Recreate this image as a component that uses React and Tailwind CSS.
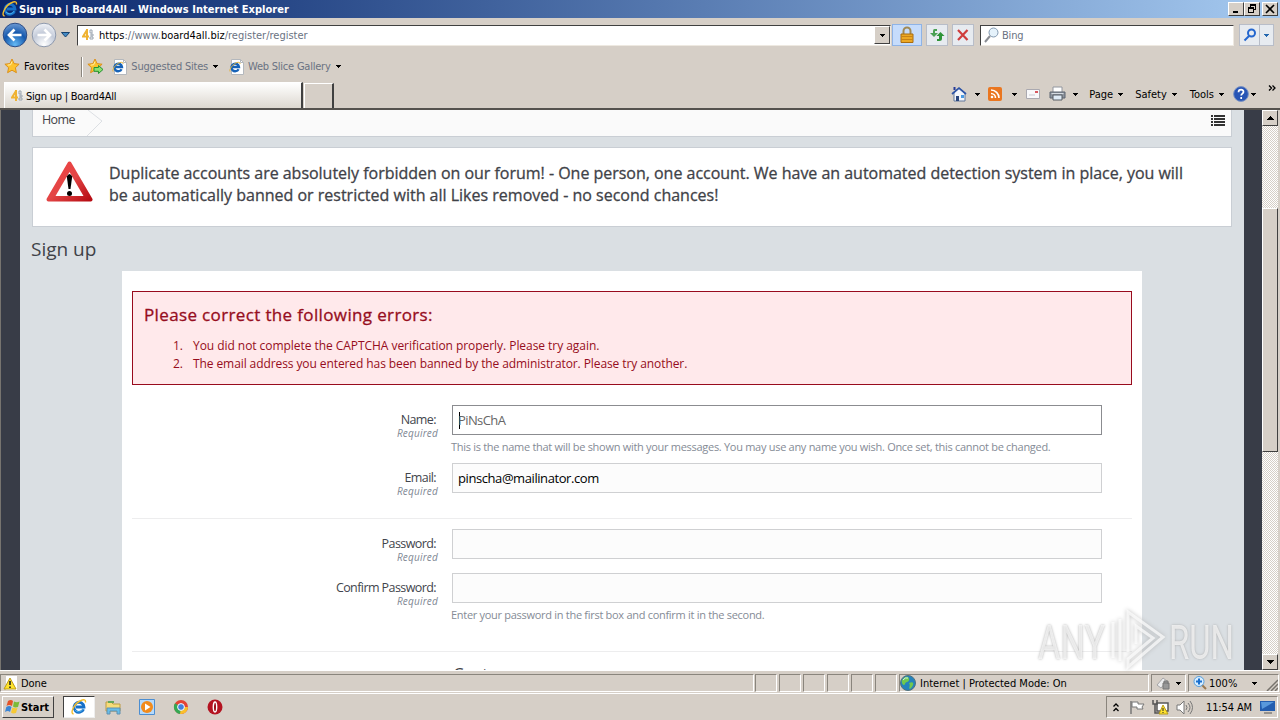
const UI = "font-['DejaVu_Sans_Condensed','DejaVu_Sans',sans-serif]";

const Caret = ({ className = "" }) => (
  <svg width="5" height="3" viewBox="0 0 5 3" className={`shrink-0 ${className}`} shapeRendering="crispEdges">
    <path d="M0 0h5L2.5 3z" fill="currentColor" />
  </svg>
);

const IeLogo = ({ size = 16 }) => (
  <svg width={size} height={size} viewBox="0 0 16 16" className="shrink-0">
    <path d="M12.600 10.300A5 5 0 1 1 13 8H5" fill="none" stroke="#1670c8" strokeWidth="2.800" />
    <path d="M12.200 9.800A4.800 4.800 0 0 1 4 11" fill="none" stroke="#4cb4f0" strokeWidth="1" />
    <path d="M2.600 15C-1.500 14.500 3 5 9 2c4-2 6-1.600 5.400 1.500" fill="none" stroke="#f4bd2c" strokeWidth="1.400" />
  </svg>
);

const IePage = () => (
  <svg width="16" height="16" viewBox="0 0 16 16" className="shrink-0">
    <path d="M2.500 .5h9l3 3v12h-12z" fill="#fff" stroke="#b4b8bd" />
    <path d="M11.500 .5v3h3" fill="none" stroke="#b4b8bd" />
    <path d="M9.600 10.200A3.800 3.800 0 1 1 10 8H3" fill="none" stroke="#1763b8" strokeWidth="2.300" />
    <path d="M1 12.500C0 10 4 5 8 3.500c2-.5 3.500 0 3 1.500" fill="none" stroke="#e3b43c" />
  </svg>
);

const BoardIcon = () => (
  <svg width="12" height="12" viewBox="0 0 12 12" className="shrink-0">
    <path d="M5 0v11M5 1L1 7.500h6" fill="none" stroke="#efb232" strokeWidth="2" />
    <path d="M8 1h2v3H8zM9 5h2v2H9zM8 8h3v2H8z" fill="none" stroke="#9aa4b0" />
  </svg>
);

const Star = ({ arrow }) => (
  <svg width="17" height="17" viewBox="0 0 17 17" className="shrink-0">
    <path d="M8 1l2.100 4.600 5 .6-3.700 3.500 1 5L8 12.200l-4.400 2.500 1-5L.9 6.200l5-.6z" fill="#fdc32f" stroke="#d98a12" strokeWidth=".9" />
    <path d="M8 3.500L6.700 6.700l-3 .4" fill="none" stroke="#fff0a8" />
    {arrow && <path d="M7 9.500h4.500V7.500l4.500 4-4.500 4v-2.200H7z" fill="#8be070" stroke="#249334" />}
  </svg>
);

const NavArrow = ({ forward }) => (
  <svg width="26" height="26" viewBox="0 0 26 26" className="shrink-0">
    <defs>
      <radialGradient id={forward ? "fwd" : "back"} cx=".5" cy=".9" r=".9">
        <stop offset="0" stopColor={forward ? "#ffffff" : "#65b9f4"} />
        <stop offset=".55" stopColor={forward ? "#c5ccda" : "#1558ad"} />
        <stop offset="1" stopColor={forward ? "#f1f3f8" : "#6e9bd4"} />
      </radialGradient>
    </defs>
    <circle cx="13" cy="13" r="11.800" fill={forward ? "url(#fwd)" : "url(#back)"} stroke={forward ? "#8e99ad" : "#2c4c86"} />
    <path
      d={forward ? "M6.500 13h12M13.500 7.500l5.500 5.500-5.500 5.500" : "M19.500 13h-12M12.500 7.500L7 13l5.500 5.500"}
      fill="none"
      stroke="#fff"
      strokeWidth="2.700"
    />
  </svg>
);

const WindowButton = ({ children, className = "" }) => (
  <div className={`h-[14px] w-4 bg-[#d6cfc7] border border-t-white border-l-white border-r-[#404040] border-b-[#404040] flex items-center justify-center ${className}`}>
    <svg width="12" height="12" viewBox="0 0 12 12" fill="none" stroke="#000" shapeRendering="crispEdges" className="shrink-0">
      {children}
    </svg>
  </div>
);

const TitleBar = () => (
  <div className="h-[18px] flex items-center bg-linear-to-r from-[#0a246a] to-[#a6caf0] pl-[2px] pr-[2px]">
    <IeLogo />
    <span className="ml-px pt-[2px] text-[11px] leading-[16px] font-bold text-white tracking-[0.05px] whitespace-nowrap">
      Sign up | Board4All - Windows Internet Explorer
    </span>
    <div className="ml-auto flex">
      <WindowButton><path d="M3 9h5" strokeWidth="2" /></WindowButton>
      <WindowButton><path d="M4.500 4V1.500h5v5H8M4 2.500h6M2.500 4.500h5v5h-5zM2 5.500h6" /></WindowButton>
      <WindowButton className="ml-[2px]"><path d="M2 2l8 8M10 2l-8 8" strokeWidth="1.600" shapeRendering="auto" /></WindowButton>
    </div>
  </div>
);

const AddressBar = () => (
  <div className="h-[34px] flex items-center pl-[2px] pr-[6px]">
    <NavArrow />
    <div className="ml-[3px]"><NavArrow forward /></div>
    <svg width="9" height="6" viewBox="0 0 9 6" className="ml-[4px]"><path d="M.5.5h8L4.500 5z" fill="#438ac4" stroke="#17436f" /></svg>
    <div className="ml-[7px] w-[814px] h-[21px] bg-white border border-t-[#404040] border-l-[#404040] border-[#eee9e1] flex items-center pl-[4px]">
      <BoardIcon />
      <span className="ml-[5px] pt-[2px] text-[11px] text-gray-500 tracking-[0px] whitespace-nowrap">
        <span className="text-black">https</span>://www.<span className="text-black">board4all.biz</span>/register/register
      </span>
      <div className="ml-auto w-4 h-[18px] bg-[#d6cfc7] border border-t-white border-l-white border-[#404040] flex items-center justify-center">
        <Caret />
      </div>
    </div>
    <div className="ml-[1px] w-[30px] h-[22px] bg-[#c6dcfb] border border-[#8eb3e6] flex items-center justify-center">
      <svg width="16" height="18" viewBox="0 0 16 18">
        <path d="M4.500 8V5a3.500 3.500 0 0 1 7 0v3" fill="none" stroke="#a18a55" strokeWidth="2" />
        <path d="M2 8h12v8.500H2z" fill="#eca824" stroke="#a96d10" />
        <path d="M2 10.500h12M2 13.500h12" stroke="#c78318" />
      </svg>
    </div>
    <div className="ml-[4px] w-[22px] h-[22px] bg-[#e7ebf0] border border-[#b8bdc8] flex items-center justify-center">
      <svg width="16" height="16" viewBox="0 0 16 16" fill="#2e9438">
        <path d="M8 2H5.500Q4 2 4 4v2H1l4 4 4-4H6V4h2z" fillOpacity=".85" />
        <path d="M8 14h2.500Q13 14 13 12V9h2.500l-4-4-4 4H10v3H8z" />
      </svg>
    </div>
    <div className="ml-[4px] w-[22px] h-[22px] bg-[#e7ebf0] border border-[#b8bdc8] flex items-center justify-center">
      <svg width="14" height="14" viewBox="0 0 14 14"><path d="M2 2l9.500 10M11.500 2L2 12" stroke="#cf3d3d" strokeWidth="2.200" /></svg>
    </div>
    <div className="ml-[6px] w-[254px] h-[21px] bg-white border border-t-[#404040] border-l-[#404040] border-[#eee9e1] flex items-center pl-[3px]">
      <svg width="15" height="16" viewBox="0 0 15 16"><circle cx="9.500" cy="5.500" r="4.500" fill="#e5f2fb" stroke="#8399b0" /><path d="M6 9l-5 6" stroke="#8a8d94" strokeWidth="2" /></svg>
      <span className="ml-[3px] pt-[2px] text-[11px] text-gray-500 tracking-[-0.2px]">Bing</span>
    </div>
    <div className="ml-auto flex h-[22px] w-[35px] bg-[#e7ebf0] border border-[#b8bdc8]">
      <div className="w-5 flex items-center justify-center border-r border-[#b8bdc8]">
        <svg width="14" height="14" viewBox="0 0 14 14" fill="none" stroke="#2467cf" strokeWidth="2"><circle cx="8.500" cy="5" r="3.500" /><path d="M6 8l-4.500 4.500" /></svg>
      </div>
      <div className="flex-1 flex items-center justify-center"><Caret className="text-[#2467af]" /></div>
    </div>
  </div>
);

const FavoritesBar = () => (
  <div className="h-[28px] flex items-center pl-[4px] pt-px text-[11px] whitespace-nowrap">
    <Star />
    <span className="ml-[3px] pt-px tracking-[0.08px]">Favorites</span>
    <div className="ml-[12px] w-[2px] h-[20px] border-l border-[#8a857d] bg-white" />
    <div className="ml-[4px]"><Star arrow /></div>
    <div className="ml-[8px]"><IePage /></div>
    <span className="ml-[3px] pt-[2px] text-gray-500 tracking-[-0.22px]">Suggested Sites</span>
    <Caret className="ml-[5px]" />
    <div className="ml-[11px]"><IePage /></div>
    <span className="ml-[3px] pt-[2px] text-gray-500 tracking-[-0.22px]">Web Slice Gallery</span>
    <Caret className="ml-[5px]" />
  </div>
);

const MenuItem = ({ label, className = "" }) => (
  <div className={`flex items-center ${className}`}>
    <span className="pt-[2px]">{label}</span>
    <Caret className="ml-[5px]" />
  </div>
);

const TabBar = () => (
  <div className="h-[30px] flex items-end pl-[4px] text-[11px] whitespace-nowrap border-b-2 border-[#55524e]">
    <div className="w-[299px] h-[26px] bg-linear-to-b from-white to-[#ddd8d0] border-l border-t border-white border-r-2 border-r-[#404040] flex items-center pl-[6px]">
      <BoardIcon />
      <span className="ml-[3px] pt-[3px] tracking-[-0.22px]">Sign up | Board4All</span>
    </div>
    <div className="ml-[1px] w-[30px] h-[25px] border-l border-t border-white border-r-2 border-r-[#404040]" />
    <div className="h-[28px] ml-auto pr-[4px] flex items-center">
      <svg width="16" height="16" viewBox="0 0 16 16">
        <path d="M3 7v8h11V7L8 2z" fill="#f3f6fb" stroke="#62789c" /><path d="M1 8l7-6 7 6" fill="none" stroke="#2d54a6" strokeWidth="1.700" />
        <path d="M2.500 1h2v3h-2z" fill="#263b97" /><path d="M5 10h3v5H5z" fill="#28457c" /><path d="M10 9h3v3h-3z" fill="#4b9be2" />
      </svg>
      <Caret className="ml-[8px]" />
      <svg width="14" height="14" viewBox="0 0 14 14" className="ml-[8px]">
        <rect width="14" height="14" rx="2" fill="#ea7620" /><path d="M3 3a8 8 0 0 1 8 8M3 6.500A4.500 4.500 0 0 1 7.500 11" fill="none" stroke="#fff" strokeWidth="1.600" /><circle cx="4" cy="10" r="1.300" fill="#fff" />
      </svg>
      <Caret className="ml-[10px]" />
      <svg width="14" height="10" viewBox="0 0 14 10" className="ml-[9px]">
        <path d="M.5.5h13v9H.5z" fill="#f8f8fa" stroke="#aaa9b0" /><path d="M9 2h3v2H9z" fill="#d8585f" /><path d="M3 6h6" stroke="#c9c9d1" />
      </svg>
      <svg width="17" height="16" viewBox="0 0 17 16" className="ml-[9px]">
        <path d="M4 1h9v6H4z" fill="#fff" stroke="#92969e" /><path d="M1 6h15v6H1z" fill="#8d949e" stroke="#5d6470" /><path d="M4 9h9v5H4z" fill="#dfebf6" stroke="#575c65" /><path d="M2.500 7.500h12" stroke="#d4dae0" />
      </svg>
      <Caret className="ml-[7px]" />
      <MenuItem label="Page" className="ml-[11px]" />
      <MenuItem label="Safety" className="ml-[12px]" />
      <MenuItem label="Tools" className="ml-[13px]" />
      <svg width="16" height="16" viewBox="0 0 16 16" className="ml-[9px]">
        <circle cx="8" cy="8" r="7.400" fill="#2855b5" stroke="#7b93c4" />
        <path d="M5.500 6.200c0-3.500 5.200-3.200 5-.3-.1 1.600-2.300 1.900-2.300 3.700M8.200 11v2" fill="none" stroke="#fff" strokeWidth="1.700" />
      </svg>
      <Caret className="ml-[2px]" />
      <svg width="8" height="6" viewBox="0 0 8 6" fill="none" stroke="#000" strokeWidth="1.300" className="ml-[12px] mb-[13px]">
        <path d="M1 .5L3.500 3 1 5.500M4.500.5L7 3 4.500 5.500" />
      </svg>
    </div>
  </div>
);

const Field = ({ label, hint, value, active, className = "" }) => (
  <div className={`flex ${className}`}>
    <div className="w-[306px] mr-[14px] shrink-0 text-right pt-[7px]">
      <div className="text-[12.5px] leading-[16px] pr-[2px] text-[#42454c] tracking-[-0.58px]">{label}</div>
      <div className="-mt-px text-[10px] leading-[12px] italic text-[#808894] tracking-[0.2px]">Required</div>
    </div>
    <div>
      <div
        className={`w-[650px] h-[30px] border flex items-center pl-[5px] text-[13px] ${
          active ? "bg-white border-[#8b8c90] text-[#666]" : "bg-[#fcfcfc] border-[#cfd0d2] text-black"
        }`}
      >
        {active && <div className="ml-px w-px h-[17px] bg-black" />}
        <span className={active ? "-ml-[2px] pt-[2px] tracking-[-0.6px]" : "pt-[2px] tracking-[-0.42px]"}>{value}</span>
      </div>
      {hint && <div className="mt-[5px] -ml-px text-[11px] leading-[14px] text-[#858b96] whitespace-nowrap tracking-[-0.29px]">{hint}</div>}
    </div>
  </div>
);

const WarningSign = () => (
  <svg width="48" height="42" viewBox="0 0 48 42" className="shrink-0">
    <defs><linearGradient id="warn" x2="1" y2="1"><stop stopColor="#f04444" /><stop offset=".5" stopColor="#e34545" /><stop offset="1" stopColor="#b70d14" /></linearGradient></defs>
    <path d="M24.500 2.500L45.500 38.500h-42z" fill="url(#warn)" stroke="url(#warn)" strokeWidth="4" strokeLinejoin="round" />
    <path d="M24.500 11L38.500 35h-28z" fill="#fff" />
    <path d="M21.800 15.500q2.700-5 5.400 0L25.500 28h-2z" fill="#000" /><circle cx="24.500" cy="32.500" r="2.500" />
  </svg>
);

const ForumPage = () => (
  <div className="w-[1224px] h-[560px] overflow-hidden bg-[#dadfe3] px-[12px] font-['Open_Sans','Noto_Sans',sans-serif] text-[#3f4248]">
    <div className="h-[27px] bg-[#fafafa] border border-t-0 border-[#c9ced4] flex items-start">
      <span className="pl-[9px] pt-px w-[43px] text-[12.5px] leading-[18px] tracking-[-0.6px]">Home</span>
      <svg width="18" height="26" viewBox="0 0 18 26" className="ml-[10px]" fill="none" stroke="#dcdfe3"><path d="M2 0l14 11L1 26" /></svg>
      <svg width="14" height="11" viewBox="0 0 14 11" className="ml-auto mr-[6px] mt-[5px]" shapeRendering="crispEdges" fill="#333"><path d="M0 0h2v2H0zM3 0h11v2H3zM0 3h2v2H0zM3 3h11v2H3zM0 6h2v2H0zM3 6h11v2H3zM0 9h2v2H0zM3 9h11v2H3z" /></svg>
    </div>
    <div className="mt-[10px] h-[80px] bg-white border border-[#c9ced4] flex pl-[12px] pt-[13px]">
      <WarningSign />
      <p className="ml-[16px] pt-px text-[16px] leading-[22px] whitespace-nowrap [-webkit-text-stroke:0.3px]">
        <span className="block tracking-[-0.02px]">Duplicate accounts are absolutely forbidden on our forum! - One person, one account. We have an automated detection system in place, you will</span>
        <span className="block">be automatically banned or restricted with all Likes removed - no second chances!</span>
      </p>
    </div>
    <h1 className="mt-[9px] mb-[9px] -ml-px text-[19px] leading-[26px]">Sign up</h1>
    <div className="mx-[90px] h-[440px] bg-white px-[10px] pt-[20px]">
      <div className="h-[94px] bg-[#ffe9eb] border border-[#980b1d] text-[#960d20] pl-[11px] pt-[11px]">
        <h2 className="text-[17px] leading-[24px] tracking-[0.36px] [-webkit-text-stroke:0.3px]">Please correct the following errors:</h2>
        <ol className="mt-[10px] text-[12px] leading-[18px] pl-[29px] whitespace-nowrap">
          <li className="flex"><span className="w-[20px]">1.</span><span className="tracking-[-0.05px]">You did not complete the CAPTCHA verification properly. Please try again.</span></li>
          <li className="flex"><span className="w-[20px]">2.</span><span className="tracking-[-0.09px]">The email address you entered has been banned by the administrator. Please try another.</span></li>
        </ol>
      </div>
      <Field className="mt-[20px] h-[58px]" label="Name:" value="PiNsChA" active hint="This is the name that will be shown with your messages. You may use any name you wish. Once set, this cannot be changed." />
      <Field className="h-[55px]" label="Email:" value="pinscha@mailinator.com" />
      <div className="h-[11px] border-t border-[#ededee]" />
      <Field className="h-[44px]" label="Password:" />
      <Field className="h-[78px]" label="Confirm Password:" hint="Enter your password in the first box and confirm it in the second." />
      <div className="border-t border-[#ededee] pt-[10px] pl-[321px] text-[17px] leading-[24px]">Custom</div>
    </div>
  </div>
);

const ScrollButton = ({ up }) => (
  <div className="h-[16px] w-[16px] bg-[#d6cfc7] border border-t-white border-l-white border-[#404040] flex items-center justify-center">
    <svg width="7" height="4" viewBox="0 0 7 4" shapeRendering="crispEdges"><path d={up ? "M0 4h7L3.500 0z" : "M0 0h7L3.500 4z"} /></svg>
  </div>
);

const Scrollbar = () => (
  <div className="w-[16px] h-[560px] flex flex-col bg-[repeating-conic-gradient(#fff_0_25%,#d6cfc7_0_50%)] bg-size-[2px_2px]">
    <ScrollButton up />
    <div className="mt-[82px] h-[244px] bg-[#d6cfc7] border border-t-white border-l-white border-r-[#404040] border-b-[#404040]" />
    <div className="mt-auto"><ScrollButton /></div>
  </div>
);

const AnyRunMark = () => (
  <div className="absolute left-[1038px] top-[608px] w-[198px] h-[64px] flex items-center font-['Roboto',sans-serif] text-[49px] text-white/70 [text-shadow:0_0_3px_#aaa]">
    <span className="w-[66px] pt-[5px] origin-left scale-x-[0.7]">ANY</span>
    <svg width="56" height="64" viewBox="0 0 56 64" className="ml-[6px] shrink-0 drop-shadow-[0_0_2px_#aaa]" fill="none" stroke="#fff" strokeOpacity=".7" strokeWidth="3">
      <path d="M18 44V4l35 25-35 30v-8l25-21-17-12v18M10 11v42M3 14v36" />
    </svg>
    <span className="ml-[3px] pt-[5px] origin-left scale-x-[0.67]">RUN</span>
  </div>
);

const Pane = ({ children, className = "" }) => (
  <div className={`h-[18px] shrink-0 border border-t-[#8a857d] border-l-[#8a857d] border-r-white border-b-white flex items-center ${className}`}>{children}</div>
);

const StatusBar = () => (
  <div className="h-[23px] border-t border-white pt-[3px] flex text-[11px] whitespace-nowrap">
    <Pane className="w-[754px] pl-[2px]">
      <svg width="15" height="15" viewBox="0 0 15 15"><path d="M3 0h11v14H3z" fill="#fff" /><path d="M7 2l6 11H1z" fill="#ffe32b" stroke="#bd9b18" /><path d="M7 5v4M7 10.500v1.500" stroke="#222" strokeWidth="1.600" /></svg>
      <span className="ml-[3px] pt-[2px] tracking-[-0.1px]">Done</span>
    </Pane>
    <Pane className="w-[22px] ml-px" />
    <Pane className="w-[22px] ml-[2px]" />
    <Pane className="w-[22px] ml-[2px]" />
    <Pane className="w-[22px] ml-[2px]" />
    <Pane className="w-[22px] ml-[2px]" />
    <Pane className="w-[22px] ml-[2px]" />
    <Pane className="w-[250px] ml-[2px]">
      <svg width="16" height="16" viewBox="0 0 16 16"><circle cx="8" cy="8" r="7.500" fill="#2483bd" stroke="#51717d" /><path d="M3 4c3-4 7-2 6 1S6 6 5 9 1 8 2 5M9 8c6-3 5 3 1 6-2-1 1-3-1-6" fill="#71c84e" /><path d="M3 5q2-3 5-2" stroke="#cdf2ed" fill="none" /></svg>
      <span className="ml-[4px] pt-[2px]">Internet | Protected Mode: On</span>
    </Pane>
    <Pane className="w-[35px] ml-[2px] pl-[4px]">
      <svg width="15" height="15" viewBox="0 0 15 15"><path d="M1 9l6-7 4 3-6 7z" fill="#ededee" stroke="#a5a5a7" /><path d="M8 7V5h4v3M7 7h6v6H7z" fill="#989898" stroke="#777" /></svg>
      <Caret className="ml-[5px]" />
    </Pane>
    <Pane className="w-[91px] ml-[2px] pl-[4px]">
      <svg width="14" height="14" viewBox="0 0 14 14"><path d="M8 8l5 5" stroke="#9a7850" strokeWidth="2" /><circle cx="6" cy="5.500" r="5" fill="#d7edff" stroke="#579fdd" /><path d="M6 2.500v6M3 5.500h6" stroke="#196fce" strokeWidth="2" /></svg>
      <span className="ml-[2px] pt-[2px]">100%</span>
      <Caret className="ml-[15px]" />
      <svg width="12" height="12" viewBox="0 0 12 12" className="ml-auto mt-[4px]" stroke="#77736d"><path d="M1 12L12 1M5 12l7-7M9 12l3-3" strokeWidth="1.500" /></svg>
    </Pane>
  </div>
);

const Taskbar = () => (
  <div className="h-[27px] border-t border-white flex items-center pl-[2px] pr-[2px] text-[11px]">
    <div className="w-[52px] h-[22px] border border-t-white border-l-white border-r-[#404040] border-b-[#404040] flex items-center pl-[2px]">
      <svg width="16" height="16" viewBox="0 0 16 16" className="shrink-0"><path d="M3 2q3-2 5 0L7 7Q4 5 1.500 7z" fill="#e45328" /><path d="M9 2.500q3 1.500 5.500 0L13 8q-3 1-5-.5z" fill="#7cba39" /><path d="M1.300 8q3-2 5.200 0L5 13q-2-2-5 0z" fill="#3a85d5" /><path d="M7.500 8.500q3 1.500 5 .3L11 14q-3 1-5-.5z" fill="#f7c934" /></svg>
      <span className="pt-[2px] font-bold tracking-[-0.05px]">Start</span>
    </div>
    <div className="ml-[9px] w-[32px] h-[22px] bg-white border border-t-[#404040] border-l-[#404040] border-[#eee] flex items-center justify-center"><IeLogo /></div>
    <svg width="16" height="16" viewBox="0 0 16 16" className="ml-[10px]"><path d="M1 3h5l2 2h7v7H1z" fill="#f7dc79" stroke="#bd9b45" /><path d="M3 2h6v2H3z" fill="#66a75a" /><path d="M2 9h13v6h-3v-3H5v3H2z" fill="#67bde9" stroke="#6090b0" /></svg>
    <svg width="16" height="16" viewBox="0 0 16 16" className="ml-[18px]"><path d="M.5.5h15v15H.5z" fill="#b5dafc" stroke="#4c8ed1" /><circle cx="8" cy="8" r="6" fill="#f28b1c" /><path d="M6 4.500L11.500 8 6 11.500z" fill="#fff" /></svg>
    <svg width="16" height="16" viewBox="0 0 16 16" className="ml-[18px]"><circle cx="8" cy="8" r="7" fill="#e54335" /><path d="M8 8L2 4.300A7 7 0 0 0 8 15z" fill="#35a853" /><path d="M8 8h7A7 7 0 0 1 7 15z" fill="#fac02c" /><circle cx="8" cy="8" r="3.400" fill="#4380df" stroke="#fff" /></svg>
    <svg width="16" height="16" viewBox="0 0 16 16" className="ml-[18px]"><circle cx="8" cy="8" r="7.500" fill="#b41320" /><ellipse cx="8" cy="8" rx="1.700" ry="5" fill="#9b1018" stroke="#fff" strokeWidth="1.400" /></svg>
    <Pane className="ml-auto w-[172px] h-[22px] pl-[6px]">
      <svg width="6" height="9" viewBox="0 0 6 9" fill="none" stroke="#000" strokeWidth="1.300"><path d="M.5 3.500L3 1l2.500 2.500M.5 8L3 5.500 5.500 8" /></svg>
      <svg width="16" height="15" viewBox="0 0 16 15" className="ml-[10px]" fill="#fff" stroke="#777"><path d="M2 1v13" strokeWidth="1.500" /><path d="M3 2h6v2h6l-2 3 1 2H8V7H3z" /></svg>
      <svg width="17" height="16" viewBox="0 0 17 16" className="ml-[7px]"><path d="M5 4h11v8H5z" fill="#fff" stroke="#595959" strokeWidth="1.500" /><path d="M1 1v4h4V1M3 5v9h8" fill="none" stroke="#555" strokeWidth="1.500" /><path d="M11 6l5 9H7z" fill="#ffe32e" stroke="#b79b18" /><path d="M11 9v3M11 13v1" stroke="#222" /></svg>
      <svg width="17" height="15" viewBox="0 0 17 15" className="ml-[7px]" fill="none" stroke="#777"><path d="M1 5h3l4-4v13l-4-4H1z" fill="#fff" /><path d="M10 5q2 2.500 0 5M12 3q4 4.500 0 9M14 1q5 6.500 0 13" /></svg>
      <span className="ml-[13px] pt-[2px] whitespace-nowrap tracking-[-0.12px]">11:54 AM</span>
      <svg width="15" height="14" viewBox="0 0 15 14" className="ml-[8px]"><path d="M0 1h15v10H0z" fill="#245eaf" /><path d="M1 2h13L2 9z" fill="#5999dc" /><path d="M4 13h8" stroke="#555" /></svg>
    </Pane>
  </div>
);

export default function App() {
  return (
    <div className={`relative w-[1280px] h-[720px] overflow-hidden bg-[#d6cfc7] text-black ${UI}`}>
      <TitleBar />
      <AddressBar />
      <FavoritesBar />
      <TabBar />
      <div className="flex h-[560px] bg-[#383c47]">
        <div className="w-[20px] border-l border-[#77746f]" />
        <ForumPage />
        <div className="w-[18px]" />
        <Scrollbar />
        <div className="w-[2px] bg-[#d6cfc7]" />
      </div>
      <StatusBar />
      <Taskbar />
      <AnyRunMark />
    </div>
  );
}
